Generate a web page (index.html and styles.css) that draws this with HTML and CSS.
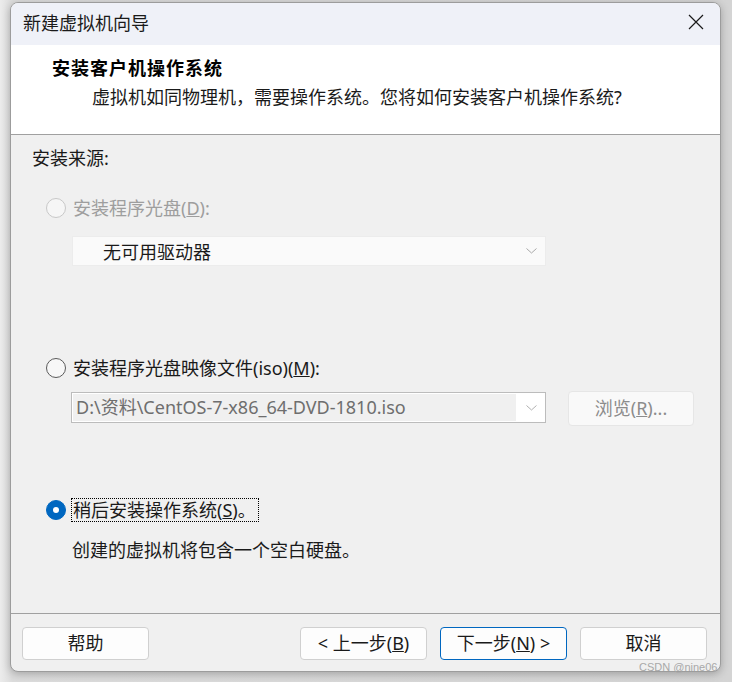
FILE: index.html
```html
<!DOCTYPE html>
<html lang="zh-CN">
<head>
    <meta charset="UTF-8">
    <meta name="viewport" content="width=device-width, initial-scale=1.0">
    <title>新建虚拟机向导</title>
    <link rel="stylesheet" href="styles.css">
</head>
<body>
    <div class="window">
        <div class="titlebar">
            <span class="title">新建虚拟机向导</span>
            <svg class="close" width="16" height="16" viewBox="0 0 16 16">
                <path d="M1 1 L15 15 M15 1 L1 15" stroke="#1a1a1a" stroke-width="1.2" fill="none"/>
            </svg>
        </div>
        <div class="header">
            <div class="heading">安装客户机操作系统</div>
            <div class="subtitle">虚拟机如同物理机，需要操作系统。您将如何安装客户机操作系统?</div>
        </div>
        <div class="content">
            <div class="section-label">安装来源:</div>

            <div class="option option-disabled option-first">
                <span class="radio"></span>
                <span class="option-text">安装程序光盘(<u>D</u>):</span>
            </div>
            <div class="select">
                <span class="select-text">无可用驱动器</span>
                <svg class="chevron" width="11" height="6" viewBox="0 0 11 6">
                    <polyline points="0.5,0.5 5.5,5 10.5,0.5" stroke="#a8a8a8" fill="none"/>
                </svg>
            </div>

            <div class="option option-second">
                <span class="radio"></span>
                <span class="option-text">安装程序光盘映像文件(iso)(<u>M</u>):</span>
            </div>
            <div class="iso-row">
                <div class="combo">
                    <span class="combo-field">D:\资料\CentOS-7-x86_64-DVD-1810.iso</span>
                    <svg class="chevron" width="11" height="6" viewBox="0 0 11 6">
                        <polyline points="0.5,0.5 5.5,5 10.5,0.5" stroke="#b0b0b0" fill="none"/>
                    </svg>
                </div>
                <div class="browse">浏览(<u>R</u>)...</div>
            </div>

            <div class="option option-third">
                <span class="radio radio-checked"></span>
                <span class="option-text focused">稍后安装操作系统(<u>S</u>)。</span>
            </div>
            <div class="note">创建的虚拟机将包含一个空白硬盘。</div>
        </div>
        <div class="footer">
            <div class="btn">帮助</div>
            <div class="btn btn-back">&lt; 上一步(<u>B</u>)</div>
            <div class="btn btn-default">下一步(<u>N</u>) &gt;</div>
            <div class="btn">取消</div>
        </div>
    </div>
    <div class="watermark">CSDN @nine06</div>
</body>
</html>
```

FILE: styles.css
```css
body {
    margin: 0;
    padding: 2px 0 0 10px;
    height: 682px;
    box-sizing: border-box;
    background: linear-gradient(to right, #ececec 0, #dcdcdc 12px, #d4d4d4 100%);
    font-family: "Noto Sans", "Noto Sans CJK SC", sans-serif;
    font-size: 18px;
    color: #1a1a1a;
    overflow: hidden;
}

.window {
    width: 711px;
    height: 670px;
    box-sizing: border-box;
    border: 1px solid #9c9c9c;
    border-radius: 8px;
    overflow: hidden;
    display: flex;
    flex-direction: column;
    background-color: #f0f0f0;
    box-shadow: 0 2px 8px rgba(0,0,0,0.25);
}

.titlebar {
    height: 42px;
    flex-shrink: 0;
    background-color: #eff1f8;
    display: flex;
    justify-content: space-between;
    align-items: flex-start;
    padding: 6px 16px 0 12px;
    box-sizing: border-box;
}

.title {
    line-height: 28px;
}

.close {
    margin-top: 5px;
}

.header {
    height: 90px;
    flex-shrink: 0;
    box-sizing: border-box;
    background-color: #fff;
    border-bottom: 1px solid #a0a0a0;
    padding-top: 11px;
}

.heading {
    padding-left: 41px;
    line-height: 24px;
    font-weight: bold;
    letter-spacing: 1px;
    color: #000;
}

.subtitle {
    padding-left: 81px;
    margin-top: 5px;
    line-height: 24px;
}

.content {
    flex: 1;
    border-bottom: 1px solid #a0a0a0;
    padding-left: 21px;
    display: flex;
    flex-direction: column;
    align-items: flex-start;
}

.section-label {
    margin-top: 11px;
    line-height: 24px;
}

.option {
    display: flex;
    align-items: center;
    height: 24px;
    padding-left: 14px;
}

.option-first {
    margin-top: 26px;
}

.option-second {
    margin-top: 90px;
}

.option-third {
    margin-top: 72px;
}

.radio {
    width: 18px;
    height: 18px;
    border: 1px solid #5a5a5a;
    border-radius: 50%;
    background-color: #f7f7f7;
    margin-right: 5px;
    position: relative;
    flex-shrink: 0;
}

.option-disabled .radio {
    border-color: #c8c8c8;
    background-color: #f6f6f6;
}

.option-disabled .option-text {
    color: #9e9e9e;
}

.radio-checked {
    border-color: #0067c0;
    background-color: #0067c0;
}

.radio-checked::after {
    content: "";
    position: absolute;
    left: 6px;
    top: 6px;
    width: 6px;
    height: 6px;
    border-radius: 50%;
    background-color: #fff;
}

.option-text {
    line-height: 22px;
    padding: 0 2px 0 1px;
    border: 1px dotted transparent;
}

.focused {
    border-color: #000;
}

.select {
    margin: 16px 0 0 40px;
    width: 474px;
    height: 30px;
    box-sizing: border-box;
    background-color: #fafafa;
    border: 1px solid #ececec;
    display: flex;
    align-items: center;
    justify-content: space-between;
    padding: 0 8px 0 30px;
}

.iso-row {
    margin: 11px 0 0 39px;
    height: 35px;
    display: flex;
    align-items: flex-start;
    gap: 22px;
}

.combo {
    margin-top: 1px;
    width: 475px;
    height: 31px;
    box-sizing: border-box;
    border: 1px solid #bcbcbc;
    background-color: #fff;
    display: flex;
    align-items: center;
    padding: 1px 8px 1px 1px;
}

.combo-field {
    width: 444px;
    height: 100%;
    background-color: #f0f0f0;
    color: #6e6e6e;
    line-height: 27px;
    padding-left: 3px;
    box-sizing: border-box;
    margin-right: 10px;
    white-space: nowrap;
}

.browse {
    width: 126px;
    height: 35px;
    box-sizing: border-box;
    border: 1px solid #e6e6e6;
    border-radius: 4px;
    background-color: #f9f9f9;
    color: #8c8c8c;
    text-align: center;
    line-height: 33px;
}

.note {
    margin: 16px 0 0 40px;
    line-height: 24px;
}

.footer {
    height: 57px;
    flex-shrink: 0;
    display: flex;
    gap: 13px;
    padding: 13px 13px 0 11px;
    box-sizing: border-box;
}

.btn {
    width: 127px;
    height: 33px;
    box-sizing: border-box;
    border: 1px solid #d0d0d0;
    border-radius: 4px;
    background-color: #fdfdfd;
    text-align: center;
    line-height: 31px;
}

.btn-back {
    margin-left: auto;
}

.btn-default {
    border-color: #0067c0;
}

.watermark {
    position: absolute;
    left: 639px;
    top: 661px;
    white-space: nowrap;
    line-height: 13px;
    font-family: "Liberation Sans", sans-serif;
    font-size: 11px;
    color: #a8a8a8;
}
```
